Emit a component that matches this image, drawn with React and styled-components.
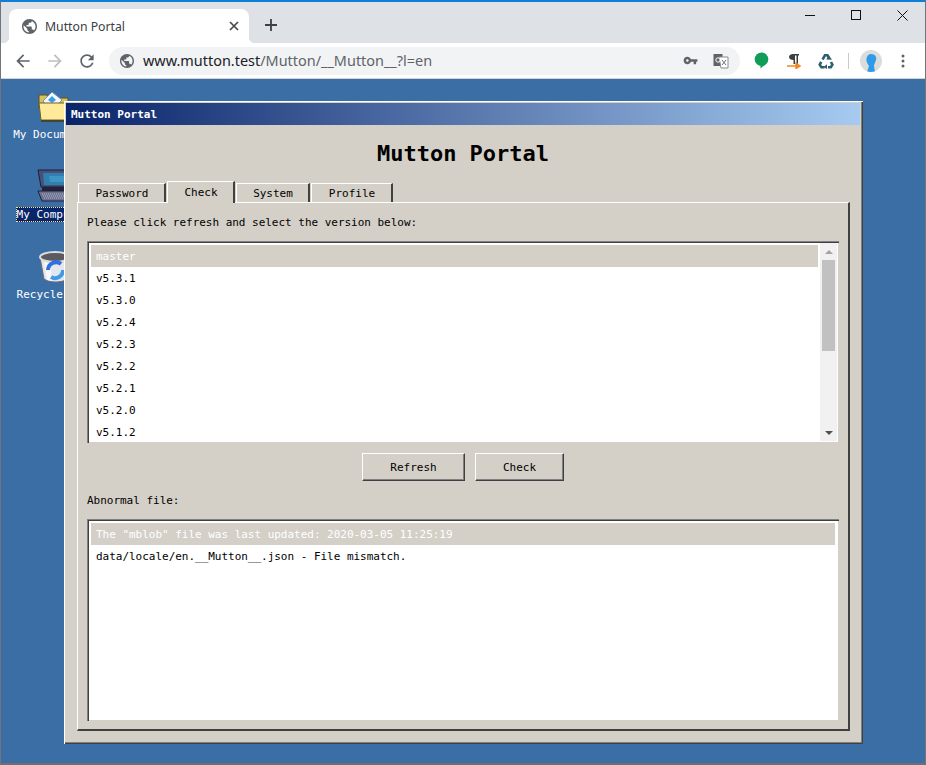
import React from 'react'
import styled, { createGlobalStyle } from 'styled-components'

const GlobalStyle = createGlobalStyle`
  html, body {
    margin: 0;
    padding: 0;
    overflow: hidden;
  }
  * {
    box-sizing: border-box;
  }
`

const mono = '"DejaVu Sans Mono", "Liberation Mono", monospace'
const ui = '"Noto Sans", "Open Sans", Arial, sans-serif'

const Frame = styled.div`
  width: 926px;
  height: 765px;
  display: flex;
  flex-direction: column;
  overflow: hidden;
  border-top: 2px solid #0f7fd6;
  border-left: 1px solid #70757a;
  border-right: 1px solid #70757a;
  border-bottom: 2px solid #6f6f6f;
  background: #dee1e6;
`

const TabStrip = styled.div`
  height: 41px;
  flex: none;
  display: flex;
  align-items: flex-end;
  padding-left: 8px;
  background: #dee1e6;
`

const BrowserTab = styled.div`
  position: relative;
  width: 240px;
  height: 34px;
  display: flex;
  align-items: center;
  padding: 0 10px 0 13px;
  background: #fff;
  border-radius: 8px 8px 0 0;
  font: 12.25px ${ui};
  color: #3c4043;
  &::before,
  &::after {
    content: '';
    position: absolute;
    bottom: 0;
    width: 6px;
    height: 6px;
  }
  &::before {
    left: -6px;
    background: radial-gradient(circle at 0 0, transparent 6px, #fff 6.5px);
  }
  &::after {
    right: -6px;
    background: radial-gradient(circle at 100% 0, transparent 6px, #fff 6.5px);
  }
`

const TabTitle = styled.span`
  flex: 1;
  margin-left: 8px;
`

const NewTab = styled.div`
  margin: 0 0 10px 14px;
  width: 16px;
  height: 16px;
  display: flex;
`

const WindowControls = styled.div`
  margin-left: auto;
  align-self: flex-start;
  display: flex;
`

const ControlButton = styled.div`
  width: 46px;
  height: 26px;
  display: flex;
  align-items: center;
  justify-content: center;
`

const Toolbar = styled.div`
  height: 36px;
  flex: none;
  display: flex;
  align-items: center;
  padding-left: 12px;
  background: #fff;
  border-bottom: 1px solid #d0d3d8;
`

const NavButton = styled.div`
  width: 20px;
  height: 20px;
  margin-right: ${props => props.gap}px;
  display: flex;
  color: ${props => props.color};
`

const Omnibox = styled.div`
  width: 631px;
  height: 28px;
  margin-left: 1px;
  display: flex;
  align-items: center;
  padding: 0 11px 0 11px;
  border-radius: 14px;
  background: #f1f3f4;
`

const Url = styled.div`
  flex: 1;
  margin-left: 9px;
  font: 14.45px ${ui};
  color: #5f6368;
  white-space: nowrap;
  span {
    color: #202124;
  }
`

const ActionIcons = styled.div`
  display: flex;
  align-items: center;
`

const Slot = styled.div`
  width: ${props => props.w}px;
  margin-left: ${props => props.ml || 0}px;
  display: flex;
  justify-content: center;
  align-items: center;
`

const Divider = styled.div`
  width: 1px;
  height: 16px;
  margin-left: 14px;
  background: #c8cacd;
`

const Avatar = styled.div`
  width: 22px;
  height: 22px;
  margin-left: 11px;
  border-radius: 50%;
  background: #dcdcdc;
  overflow: hidden;
  display: flex;
`

const Desktop = styled.div`
  position: relative;
  flex: 1;
  background: #3a6ea5;
  overflow: hidden;
`

const IconColumn = styled.div`
  width: 104px;
  padding-top: 9px;
  display: flex;
  flex-direction: column;
  align-items: center;
  gap: 8px;
`

const DesktopIcon = styled.div`
  height: 72px;
  display: flex;
  flex-direction: column;
  align-items: center;
`

const IconImage = styled.div`
  width: 36px;
  height: 36px;
  margin-bottom: 3px;
  display: flex;
`

const IconLabel = styled.div`
  font: 11px/15px ${mono};
  white-space: nowrap;
  color: #fff;
  padding: 0 1px;
  ${props => props.selected && `
    background: #0a246a;
    outline: 1px dotted #ffe08a;
    outline-offset: -1px;
  `}
`

const PortalWindow = styled.div`
  position: absolute;
  left: 63px;
  top: 22px;
  width: 799px;
  height: 643px;
  display: flex;
  flex-direction: column;
  padding: 2px 3px 3px 2px;
  background: #d4d0c8;
  box-shadow: inset 1px 1px 0 #fff, inset -1px -1px 0 #404040, inset -2px -2px 0 #808080;
`

const TitleBar = styled.div`
  height: 22px;
  flex: none;
  display: flex;
  align-items: center;
  padding-left: 5px;
  background: linear-gradient(to right, #0a246a, #a6caf0);
  color: #fff;
  font: bold 11px ${mono};
`

const Heading = styled.h1`
  height: 56px;
  margin: 0;
  flex: none;
  display: flex;
  align-items: center;
  justify-content: center;
  font: bold 22px ${mono};
  color: #000;
`

const Tabs = styled.div`
  position: relative;
  z-index: 1;
  flex: none;
  height: 22px;
  margin: 0 0 -1px 11px;
  padding-left: 1px;
  display: flex;
  align-items: flex-end;
`

const Tab = styled.div`
  width: ${props => props.w}px;
  height: ${props => (props.active ? 22 : 19)}px;
  margin: 0 1px ${props => (props.active ? 0 : 1)}px 0;
  padding-left: 1px;
  display: flex;
  align-items: center;
  justify-content: center;
  background: #d4d0c8;
  border: solid;
  border-width: 1px 2px 0 1px;
  border-color: #fff #404040 #fff #fff;
  font: 11px ${mono};
  color: #000;
`

const Panel = styled.div`
  flex: 1;
  margin: 0 10px 10px 11px;
  padding: 8px 9px 8px 9px;
  display: flex;
  flex-direction: column;
  border: solid;
  border-width: 1px 2px 2px 1px;
  border-color: #fff #404040 #404040 #fff;
  font: 11px ${mono};
  letter-spacing: -0.02px;
  color: #000;
`

const Note = styled.div`
  height: 22px;
  line-height: 24px;
  flex: none;
`

const ListBox = styled.div`
  height: ${props => props.h}px;
  margin-top: ${props => props.mt}px;
  flex: none;
  display: flex;
  padding: 2px;
  background: #fff;
  box-shadow: inset 1px 1px 0 #808080, inset 2px 2px 0 #404040, inset -1px -1px 0 #d4d0c8;
  overflow: hidden;
`

const Rows = styled.div`
  flex: 1;
  min-width: 0;
  padding: 2px 2px 0 2px;
  overflow: hidden;
`

const Row = styled.div`
  height: 22px;
  line-height: 24px;
  padding-left: 5px;
  white-space: nowrap;
  ${props => props.selected && `
    background: #d4d0c8;
    color: #fff;
  `}
`

const ScrollBar = styled.div`
  width: 17px;
  flex: none;
  display: flex;
  flex-direction: column;
  background: #f1f1f1;
`

const ScrollArrow = styled.div`
  height: 17px;
  flex: none;
  display: flex;
  align-items: center;
  justify-content: center;
  margin-top: ${props => (props.end ? 'auto' : 0)};
  &::after {
    content: '';
    border-left: 4px solid transparent;
    border-right: 4px solid transparent;
    ${props => (props.end
      ? 'border-top: 4px solid #505050;'
      : 'border-bottom: 4px solid #a3a3a3;')}
  }
`

const ScrollThumb = styled.div`
  height: 91px;
  margin: 0 2px;
  background: #c1c1c1;
`

const ButtonRow = styled.div`
  margin-top: 10px;
  flex: none;
  display: flex;
  justify-content: center;
  gap: 10px;
`

const Button = styled.button`
  width: ${props => props.w}px;
  height: 28px;
  padding: 0;
  background: #d4d0c8;
  border: solid;
  border-width: 1px;
  border-color: #fff #404040 #404040 #fff;
  box-shadow: inset -1px -1px 0 #808080;
  font: 11px ${mono};
  color: #000;
`

const AbnormalLabel = styled(Note)`
  margin-top: 8px;
`

const versions = ['v5.3.1', 'v5.3.0', 'v5.2.4', 'v5.2.3', 'v5.2.2', 'v5.2.1', 'v5.2.0', 'v5.1.2']

const Globe = ({ size, color }) => (
  <svg width={size} height={size} viewBox="2 2 20 20" fill={color}>
    <path d="M12 2C6.48 2 2 6.48 2 12s4.48 10 10 10 10-4.48 10-10S17.52 2 12 2zm-1 17.93c-3.95-.49-7-3.85-7-7.93 0-.62.08-1.21.21-1.79L9 15v1c0 1.1.9 2 2 2v1.93zm6.9-2.54c-.26-.81-1-1.39-1.9-1.39h-1v-3c0-.55-.45-1-1-1H8v-2h2c.55 0 1-.45 1-1V7h2c1.1 0 2-.9 2-2v-.41c2.93 1.19 5 4.06 5 7.41 0 2.08-.8 3.97-2.1 5.39z" />
  </svg>
)

const FolderIcon = () => (
  <svg width="36" height="36" viewBox="0 0 36 36">
    <path d="M4 7 H12 L14 10 H33 V20 H4 Z" fill="#d8c25a" stroke="#5a5418" />
    <path d="M17 4 L27 12 L22 17 H11 L8 13 Z" fill="#f4f8ff" stroke="#6f8fc4" />
    <path d="M17 8 L21 12 L17 15 L13 12 Z" fill="#3f9be8" />
    <path d="M4 15 H36 V32 H6 Z" fill="#ffe99a" stroke="#6b6420" />
    <path d="M6 33 H36" stroke="#3f3c14" strokeWidth="1.5" />
  </svg>
)

const ComputerIcon = () => (
  <svg width="36" height="36" viewBox="0 0 36 36">
    <path d="M3 2 L36 2 V19 H6 Z" fill="#4a4f78" stroke="#1c1f3a" />
    <path d="M8 5 H36 V17 H9 Z" fill="#2f7fb0" />
    <path d="M14 8 H30 V14 H15 Z" fill="#3f95c2" />
    <path d="M7 19 H36 V23 H7 Z" fill="#20233a" />
    <path d="M3 23 H36 V33 H7 Z" fill="#6d7190" stroke="#1c1f3a" />
    <path d="M7 26 H36 M8 28 H36 M9 30 H36" stroke="#b9bccb" strokeDasharray="1 1" />
  </svg>
)

const RecycleIcon = () => (
  <svg width="36" height="36" viewBox="0 0 36 36">
    <path d="M5 9 L9 31 C15 35 26 35 33 31 L36 9 Z" fill="#e4e6ec" stroke="#6c6c76" />
    <path d="M9 14 L12 32 L17 33 L15 15 Z" fill="#f8f8fb" />
    <ellipse cx="20" cy="9" rx="15" ry="5" fill="#5c5a60" stroke="#dcdcdc" strokeWidth="2" />
    <path d="M13 22 A8 8 0 0 1 26 16" fill="none" stroke="#2f6fe0" strokeWidth="4" />
    <path d="M28 22 A8 8 0 0 1 16 29" fill="none" stroke="#3f9be8" strokeWidth="4" />
  </svg>
)

const App = () => (
  <Frame>
    <GlobalStyle />
    <TabStrip>
      <BrowserTab>
        <Globe size={15} color="#5f6368" />
        <TabTitle>Mutton Portal</TabTitle>
        <svg width="10" height="10" viewBox="0 0 10 10" stroke="#45484c" strokeWidth="1.7">
          <path d="M1 1 L9 9 M9 1 L1 9" />
        </svg>
      </BrowserTab>
      <NewTab>
        <svg width="16" height="16" viewBox="0 0 16 16" stroke="#3c4043" strokeWidth="1.8">
          <path d="M8 2 V14 M2 8 H14" />
        </svg>
      </NewTab>
      <WindowControls>
        <ControlButton>
          <svg width="11" height="11" viewBox="0 0 11 11" stroke="#111">
            <path d="M0 5.5 H10" />
          </svg>
        </ControlButton>
        <ControlButton>
          <svg width="11" height="11" viewBox="0 0 11 11" fill="none" stroke="#111">
            <rect x="0.5" y="0.5" width="9" height="9" />
          </svg>
        </ControlButton>
        <ControlButton>
          <svg width="11" height="11" viewBox="0 0 11 11" stroke="#111">
            <path d="M0.5 0.5 L10.5 10.5 M10.5 0.5 L0.5 10.5" />
          </svg>
        </ControlButton>
      </WindowControls>
    </TabStrip>
    <Toolbar>
      <NavButton gap={12} color="#5f6368">
        <svg width="20" height="20" viewBox="0 0 24 24" fill="currentColor">
          <path d="M20 11H7.83l5.59-5.59L12 4l-8 8 8 8 1.41-1.41L7.83 13H20v-2z" />
        </svg>
      </NavButton>
      <NavButton gap={12} color="#bcbec1">
        <svg width="20" height="20" viewBox="0 0 24 24" fill="currentColor">
          <path d="M4 11h12.17l-5.59-5.59L12 4l8 8-8 8-1.41-1.41L16.17 13H4v-2z" />
        </svg>
      </NavButton>
      <NavButton gap={11} color="#5f6368">
        <svg width="20" height="20" viewBox="0 0 24 24" fill="currentColor">
          <path d="M17.65 6.35C16.2 4.9 14.21 4 12 4c-4.42 0-7.99 3.58-7.99 8s3.57 8 7.99 8c3.73 0 6.84-2.55 7.73-6h-2.08c-.82 2.33-3.04 4-5.65 4-3.31 0-6-2.69-6-6s2.69-6 6-6c1.66 0 3.14.69 4.22 1.78L13 11h7V4l-2.35 2.35z" />
        </svg>
      </NavButton>
      <Omnibox>
        <Globe size={14} color="#5f6368" />
        <Url><span>www.mutton.test</span>/Mutton/__Mutton__?l=en</Url>
        <ActionIcons>
          <Slot w={16}>
            <svg width="15" height="15" viewBox="0 0 24 24" fill="#5f6368">
              <path d="M12.65 10C11.83 7.67 9.61 6 7 6c-3.31 0-6 2.69-6 6s2.69 6 6 6c2.61 0 4.83-1.67 5.65-4H17v4h4v-4h2v-4H12.65zM7 14c-1.1 0-2-.9-2-2s.9-2 2-2 2 .9 2 2-.9 2-2 2z" />
            </svg>
          </Slot>
          <Slot w={16} ml={15}>
            <svg width="16" height="16" viewBox="0 0 16 16">
              <rect x="0.5" y="1" width="9" height="12" fill="#5f6368" />
              <path d="M6 4 H15 V15 H8 Z" fill="#fff" stroke="#8a8d90" />
              <circle cx="5" cy="7" r="2.2" fill="none" stroke="#fff" />
              <path d="M9 7 L13 12 M13 7 L9 12" stroke="#6d7074" />
            </svg>
          </Slot>
        </ActionIcons>
      </Omnibox>
      <ActionIcons>
        <Slot w={16} ml={13}>
          <svg width="15" height="17" viewBox="0 0 15 17" fill="#0f9d58">
            <circle cx="7.5" cy="7.2" r="6.8" />
            <path d="M6.5 13 V16.5 L10.5 13 Z" />
          </svg>
        </Slot>
        <Slot w={16} ml={17}>
          <svg width="16" height="16" viewBox="0 0 16 16">
            <path d="M7 1 H13 V2.5 H12 V11 H10.5 V2.5 H9 V11 H7.5 V7 C5 7 3 6 3 4 C3 2 5 1 7 1 Z" fill="#3c4043" />
            <path d="M1 13 H12 M10 10.5 L14 13 L10 15.5 Z" stroke="#f4881f" strokeWidth="1.5" fill="#f4881f" />
          </svg>
        </Slot>
        <Slot w={16} ml={16}>
          <svg width="16" height="16" viewBox="0 0 16 16" fill="none" stroke="#2c5f6e" strokeWidth="2.6">
            <path d="M4.6 6.5 L7 2.2 H9.4 L10.6 4.2" />
            <path d="M3.2 8.8 L1.7 11.6 L3.4 14.3 H6.6" />
            <path d="M10 14.3 H12.8 L14.4 11.6 L13 9" />
            <path d="M10.4 1.4 L14 6.8 L8.4 6.4 Z M9 11.2 V16 L5.6 14 Z" fill="#2c5f6e" stroke="none" />
          </svg>
        </Slot>
        <Divider />
        <Avatar>
          <svg width="22" height="22" viewBox="0 0 22 22">
            <path d="M11 4 C15 4 17 7 16 10 C15 13 14 14 14 16 L15 22 L7 22 L9 16 C7 13 6 11 6.5 8.5 C7 5.5 8.5 4 11 4 Z" fill="#2f9be8" />
          </svg>
        </Avatar>
        <Slot w={10} ml={16}>
          <svg width="4" height="14" viewBox="0 0 4 14" fill="#5f6368">
            <circle cx="2" cy="2" r="1.5" />
            <circle cx="2" cy="7" r="1.5" />
            <circle cx="2" cy="12" r="1.5" />
          </svg>
        </Slot>
      </ActionIcons>
    </Toolbar>
    <Desktop>
      <IconColumn>
        <DesktopIcon>
          <IconImage><FolderIcon /></IconImage>
          <IconLabel>My Documents</IconLabel>
        </DesktopIcon>
        <DesktopIcon>
          <IconImage><ComputerIcon /></IconImage>
          <IconLabel selected>My Computer</IconLabel>
        </DesktopIcon>
        <DesktopIcon>
          <IconImage><RecycleIcon /></IconImage>
          <IconLabel>Recycle Bin</IconLabel>
        </DesktopIcon>
      </IconColumn>
      <PortalWindow>
        <TitleBar>Mutton Portal</TitleBar>
        <Heading>Mutton Portal</Heading>
        <Tabs>
          <Tab w={88}>Password</Tab>
          <Tab w={68} active>Check</Tab>
          <Tab w={74}>System</Tab>
          <Tab w={82}>Profile</Tab>
        </Tabs>
        <Panel>
          <Note>Please click refresh and select the version below:</Note>
          <ListBox h={202} mt={8}>
            <Rows>
              <Row selected>master</Row>
              {versions.map(v => <Row key={v}>{v}</Row>)}
            </Rows>
            <ScrollBar>
              <ScrollArrow />
              <ScrollThumb />
              <ScrollArrow end="true" />
            </ScrollBar>
          </ListBox>
          <ButtonRow>
            <Button w={103}>Refresh</Button>
            <Button w={89}>Check</Button>
          </ButtonRow>
          <AbnormalLabel>Abnormal file:</AbnormalLabel>
          <ListBox h={202} mt={8}>
            <Rows>
              <Row selected>The "mblob" file was last updated: 2020-03-05 11:25:19</Row>
              <Row>data/locale/en.__Mutton__.json - File mismatch.</Row>
            </Rows>
          </ListBox>
        </Panel>
      </PortalWindow>
    </Desktop>
  </Frame>
)

export default App
